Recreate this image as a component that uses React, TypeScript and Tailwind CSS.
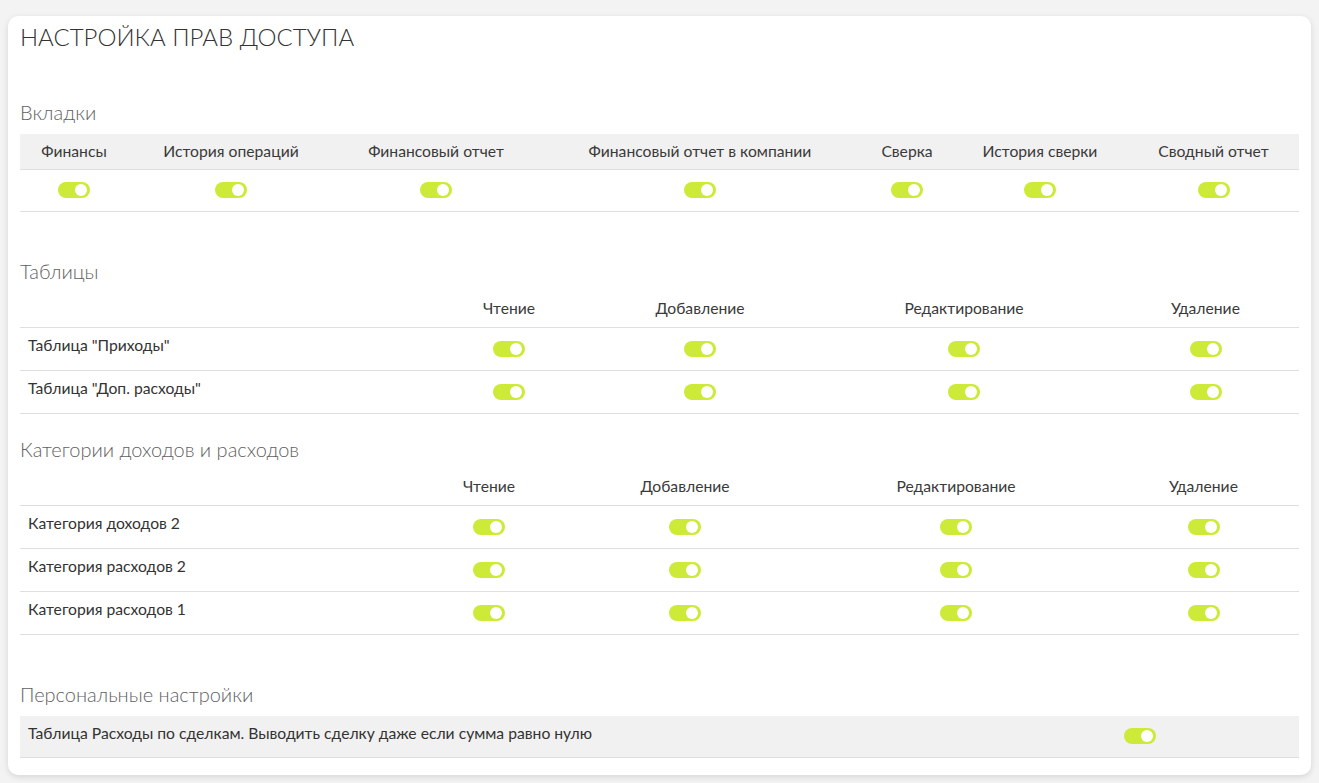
import React from "react";

const Toggle = () => (
  <span className="relative inline-block h-4 w-8 rounded-full bg-[#cdea38]">
    <span className="absolute right-[3px] top-[2px] h-3 w-3 rounded-full bg-white" />
  </span>
);

const tabs = [
  "Финансы",
  "История операций",
  "Финансовый отчет",
  "Финансовый отчет в компании",
  "Сверка",
  "История сверки",
  "Сводный отчет",
];

const actions = ["Чтение", "Добавление", "Редактирование", "Удаление"];

const SectionTitle = ({ children, className = "" }: { children: React.ReactNode; className?: string }) => (
  <div className={`text-[20px] leading-6 font-light text-[#5f5f5f] ${className}`}>{children}</div>
);

const PermTable = ({ cols, rows }: { cols: string; rows: string[] }) => (
  <div>
    <div className={`grid ${cols} h-[38px] items-center border-b border-[#dedede] text-[15.7px] text-[#3a3a3a]`}>
      <div />
      {actions.map((a) => (
        <div key={a} className="text-center">
          {a}
        </div>
      ))}
    </div>
    {rows.map((r) => (
      <div key={r} className={`grid ${cols} h-[43px] border-b border-[#dedede]`}>
        <div className="pl-2 pt-[7px] text-[15.7px] leading-5 text-[#333]">{r}</div>
        {actions.map((a) => (
          <div key={a} className="flex justify-center pt-[13px]">
            <Toggle />
          </div>
        ))}
      </div>
    ))}
  </div>
);

export default function App() {
  return (
    <div className="min-h-[783px] bg-[#f3f3f3] pt-4 pb-2 font-['Lato','Noto_Sans',sans-serif]">
      <div className="mx-2 rounded-[10px] bg-white px-3 pt-[7px] pb-[17px] shadow-[0_2px_6px_rgba(0,0,0,0.12)]">
        <h1 className="text-[24px] leading-7 font-light text-[#333]">НАСТРОЙКА ПРАВ ДОСТУПА</h1>

        <SectionTitle className="mt-[49px] mb-[10px]">Вкладки</SectionTitle>
        <div className="grid grid-cols-[108px_206px_204px_324px_90px_176px_1fr]">
          {tabs.map((t) => (
            <div
              key={t}
              className="flex h-[36px] items-center justify-center border-b border-[#dedede] bg-[#f1f1f1] text-[15.7px] text-[#3a3a3a]"
            >
              {t}
            </div>
          ))}
          {tabs.map((t) => (
            <div key={t} className="flex h-[42px] items-center justify-center border-b border-[#dedede] pb-[2px]">
              <Toggle />
            </div>
          ))}
        </div>

        <SectionTitle className="mt-[47px] mb-[7px]">Таблицы</SectionTitle>
        <PermTable
          cols="grid-cols-[414px_150px_232px_296px_1fr]"
          rows={['Таблица "Приходы"', 'Таблица "Доп. расходы"']}
        />

        <SectionTitle className="mt-[23px] mb-[7px]">Категории доходов и расходов</SectionTitle>
        <PermTable
          cols="grid-cols-[392px_154px_238px_304px_1fr]"
          rows={["Категория доходов 2", "Категория расходов 2", "Категория расходов 1"]}
        />

        <SectionTitle className="mt-[47px] mb-[10px]">Персональные настройки</SectionTitle>
        <div className="grid h-[42px] grid-cols-[960px_1fr] border-b border-[#dedede] bg-[#f1f1f1]">
          <div className="pl-2 pt-[7px] text-[15.7px] leading-5 text-[#333]">
            Таблица Расходы по сделкам. Выводить сделку даже если сумма равно нулю
          </div>
          <div className="flex justify-center pt-[12px]">
            <Toggle />
          </div>
        </div>
      </div>
    </div>
  );
}
